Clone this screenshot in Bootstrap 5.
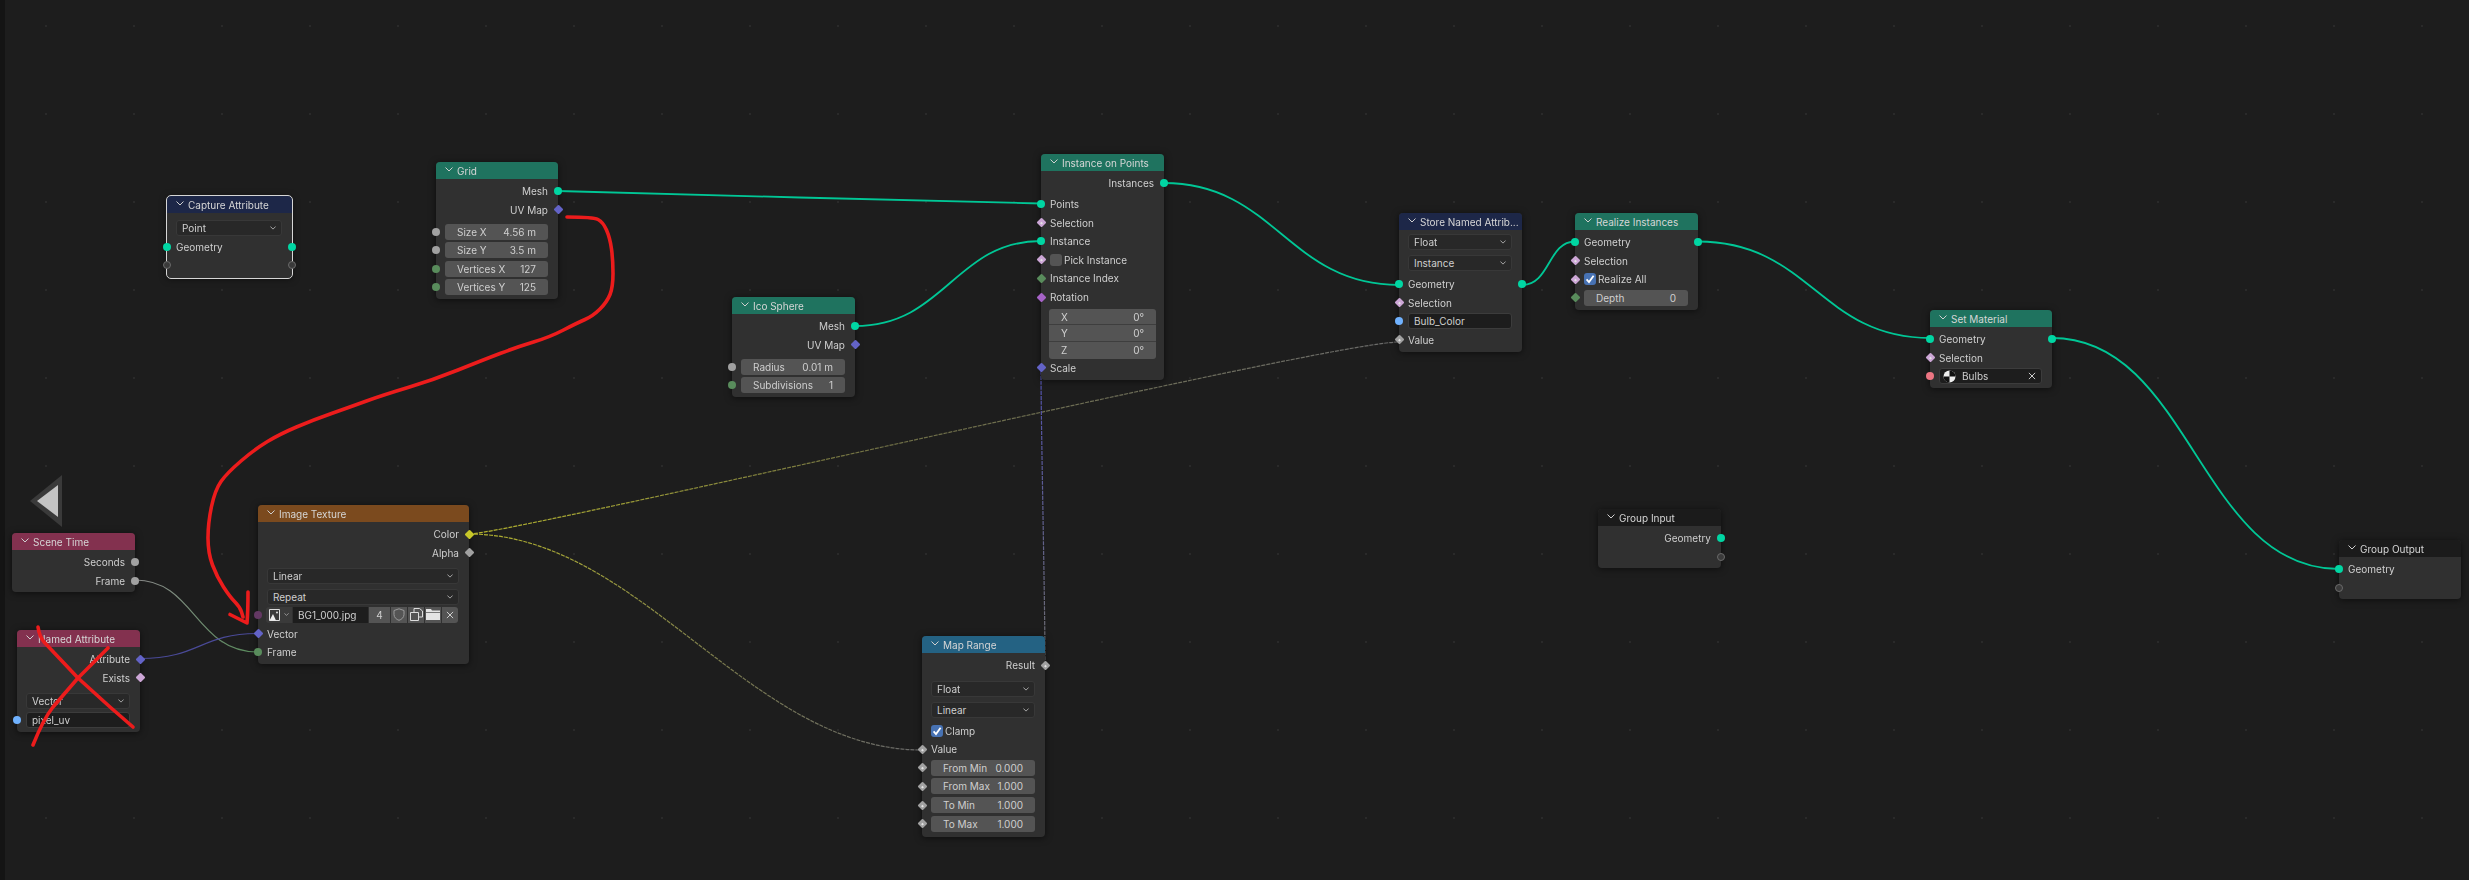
<!DOCTYPE html>
<html lang="en">
<head>
  <meta charset="UTF-8" />
  <title>Geometry Nodes</title>
  <link href="https://cdn.jsdelivr.net/npm/bootstrap@5.3.0/dist/css/bootstrap.min.css" rel="stylesheet" />
  <style>
    body { background: #1d1d1d; margin: 0; }
    .gcanvas {
      width: 2469px; height: 880px;
      font-family: "Inter", "Liberation Sans", sans-serif; font-size: 10px; color: #cfcfcf; line-height: 1;
      background-color: #1d1d1d;
      background-image: linear-gradient(#141414, #141414), radial-gradient(circle, #2a2a2a 1px, transparent 1.5px);
      background-size: 5px 100%, 88px 88px;
      background-position: 0 0, 2px -18px;
      background-repeat: no-repeat, repeat;
    }
    .glayer { left: 0; top: 0; width: 2469px; height: 880px; pointer-events: none; filter: blur(.3px); }

    .bnode { width: 123px; background: #303030; border-radius: 4px; box-shadow: 0 1px 7px rgba(0,0,0,.55); z-index: 1; filter: blur(.3px); }
    .bhead { height: 17px; padding-left: 9px; gap: 4px; border-radius: 4px 4px 0 0; color: #d6d6d6; white-space: nowrap; }
    .bhead svg { flex-shrink: 0; margin-top: -3px; }
    .bbody { padding: 2.8px 0 2.4px; }
    .brow { height: 18.6px; padding: 0 10px 0 9px; }
    .bgap { margin-top: 3.4px; }
    .bsep { margin-top: 5px; }
    .bmin { margin-top: 2.4px; }
    .bpadend { padding-bottom: 3.6px; }
    .cap-top { margin-top: 3px; }
    .cap-end { padding-bottom: 3.5px; }

    .h-geo { background: #1f735f; }
    .h-inp { background: #83314f; }
    .h-tex { background: #7b4a1e; }
    .h-con { background: #246283; }
    .h-att { background: #1d2748; }
    .h-grp { background: #1b1b1b; }

    .bsel, .bstr, .bnum { height: 16px; border-radius: 3px; }
    .bsel { background: #282828; border: 1px solid #383838; padding: 0 5px; }
    .bstr { background: #1d1d1d; border: 1px solid #3c3c3c; padding: 0 5px; }
    .bnum { background: #545454; padding: 0 12px; }
    .bvec { background: #545454; border-radius: 3px; }
    .bvec > div { height: 16.6px; padding: 0 12px; border-bottom: 1px solid #3e3e3e; }
    .bvec > div:last-child { border-bottom: 0; }
    .bcheck { width: 12px; height: 12px; border-radius: 3px; background: #545454; margin-right: 2px; }
    .bcheck.on { background: #4772b3; }

    .bsock { position: absolute; top: 50%; width: 8px; height: 8px; margin-top: -4px; border-radius: 50%; z-index: 2; }
    .bsock.dia { width: 7px; height: 7px; margin-top: -3.5px; border-radius: 1px; transform: rotate(45deg); }
    .bsock.dia.fld::after { content: ""; position: absolute; left: 2.5px; top: 2.5px; width: 2px; height: 2px; background: #e4e4e4; }
    .sl { left: -4px; }
    .sr { right: -4px; }
    .bsock.dia.sl { left: -3.5px; }
    .bsock.dia.sr { right: -3.5px; }
    .s-geo { background: #00d6a3; }
    .s-flt { background: #a1a1a1; }
    .s-int { background: #598c5c; }
    .s-vec { background: #6363c7; }
    .s-boo { background: #cca6d6; }
    .s-rot { background: #a663c7; }
    .s-col { background: #c7c729; }
    .s-str { background: #70b2ff; }
    .s-mat { background: #eb7582; }
    .s-img { background: #633863; }
    .s-nil { background: #3a3a3a; border: 1px solid #6a6a6a; }

    .imgbox { height: 16px; margin: 0 9px 2px 8px; gap: 1px; }
    .imgbox > div { height: 100%; background: #545454; }
    .imgbox .ipick { width: 26px; background: #3a3a3a; border-radius: 3px 0 0 3px; }
    .imgbox .iname { width: 75px; background: #1d1d1d; padding-left: 5px; }
    .imgbox .icnt { width: 21px; }
    .imgbox .ibtn { width: 16px; }
    .imgbox .ibtn:last-child { border-radius: 0 3px 3px 0; }
    .matbox { gap: 6px; padding-left: 3px; }

    /* node places on the canvas */
    #n-capture { left: 167px; top: 196px; width: 125px; outline: 1.5px solid #d6d6d6; }
    #n-grid { left: 436px; top: 162px; width: 122px; }
    #n-ico { left: 732px; top: 297px; }
    #n-inst { left: 1041px; top: 154px; }
    #n-store { left: 1399px; top: 213px; }
    #n-realize { left: 1575px; top: 213px; }
    #n-setmat { left: 1930px; top: 310px; width: 122px; }
    #n-ginput { left: 1598px; top: 509px; }
    #n-goutput { left: 2339px; top: 540px; width: 122px; }
    #n-scene { left: 12px; top: 533px; }
    #n-named { left: 17px; top: 630px; }
    #n-image { left: 258px; top: 505px; width: 211px; }
    #n-map { left: 922px; top: 636px; }
    .w-main { fill: none; stroke: #00c796; stroke-width: 1.8; }
    .w-thin { fill: none; stroke-width: 1.2; }
    .w-red { fill: none; stroke: #ec1c1c; stroke-width: 3.6; stroke-linecap: round; stroke-linejoin: round; }
  </style>
</head>
<body>
  <svg width="0" height="0" class="position-absolute">
    <defs>
      <symbol id="chev" viewBox="0 0 8 5"><path d="M.5.5 4 4 7.5.5" fill="none" stroke="#cfcfcf" stroke-width="1"/></symbol>
      <symbol id="tick" viewBox="0 0 12 12"><path d="M2.6 6.4 5 9 9.6 2.8" fill="none" stroke="#fff" stroke-width="1.8"/></symbol>
      <symbol id="cross" viewBox="0 0 9 9"><path d="M1 1 8 8M8 1 1 8" fill="none" stroke="#d0d0d0" stroke-width="1.1"/></symbol>
    </defs>
  </svg>

  <div class="gcanvas position-relative overflow-hidden">
    <!-- links go under the nodes -->
    <svg class="glayer position-absolute">
      <defs>
        <linearGradient id="g-frame" gradientUnits="userSpaceOnUse" x1="135" y1="580" x2="258" y2="652"><stop offset="0" stop-color="#8a8a8a"/><stop offset="1" stop-color="#598c5c"/></linearGradient>
        <linearGradient id="g-c1" gradientUnits="userSpaceOnUse" x1="469" y1="534" x2="1399" y2="342"><stop offset="0" stop-color="#b4b42e"/><stop offset=".45" stop-color="#6e6e45"/><stop offset="1" stop-color="#6a6a6a"/></linearGradient>
        <linearGradient id="g-c2" gradientUnits="userSpaceOnUse" x1="469" y1="534" x2="922" y2="750"><stop offset="0" stop-color="#b4b42e"/><stop offset=".6" stop-color="#777750"/><stop offset="1" stop-color="#6a6a6a"/></linearGradient>
        <linearGradient id="g-sc" gradientUnits="userSpaceOnUse" x1="1045" y1="665" x2="1041" y2="369"><stop offset="0" stop-color="#6e6e6e"/><stop offset="1" stop-color="#5050b0"/></linearGradient>
      </defs>
      <path class="w-main" d="M558 191C580 191.6 1018 203.5 1041 203.5"/>
      <path class="w-main" d="M855 326C945 326 955 241 1041 241"/>
      <path class="w-main" d="M1164 183C1275 183 1288 285 1399 285"/>
      <path class="w-main" d="M1522 285C1550 285 1548 241.5 1575 241.5"/>
      <path class="w-main" d="M1698 241.5C1810 241.5 1820 338 1930 338"/>
      <path class="w-main" d="M2052 338C2190 338 2200 569 2339 569"/>
      <path class="w-thin" stroke="url(#g-frame)" d="M135 580C195 580 195 652 258 652"/>
      <path class="w-thin" stroke="#4a4a98" d="M140 658.5C200 658.5 200 633.5 258 633.5"/>
      <path class="w-thin" stroke="url(#g-c1)" stroke-dasharray="4 1" d="M469 534C510 534 1330 342 1399 342"/>
      <path class="w-thin" stroke="url(#g-c2)" stroke-dasharray="4 1" d="M469 534C640 534 750 750 922 750"/>
      <path class="w-thin" stroke="url(#g-sc)" stroke-dasharray="4 1" d="M1045 665C1045 600 1041 430 1041 369"/>
    </svg>

    <div class="bnode position-absolute" id="n-capture">
      <div class="bhead h-att d-flex align-items-center"><svg width="8" height="5"><use href="#chev"/></svg>Capture Attribute</div>
      <div class="bbody cap-end">
        <div class="brow d-flex align-items-center cap-top"><div class="bsel flex-fill d-flex justify-content-between align-items-center">Point<svg width="6" height="4"><use href="#chev"/></svg></div></div>
        <div class="brow d-flex align-items-center position-relative">Geometry<i class="bsock s-geo sl"></i><i class="bsock s-geo sr"></i></div>
        <div class="brow position-relative"><i class="bsock s-nil sl"></i><i class="bsock s-nil sr"></i></div>
      </div>
    </div>

    <div class="bnode position-absolute" id="n-grid">
      <div class="bhead h-geo d-flex align-items-center"><svg width="8" height="5"><use href="#chev"/></svg>Grid</div>
      <div class="bbody">
        <div class="brow d-flex align-items-center justify-content-end position-relative">Mesh<i class="bsock s-geo sr"></i></div>
        <div class="brow d-flex align-items-center justify-content-end position-relative">UV Map<i class="bsock dia s-vec sr"></i></div>
        <div class="brow bgap d-flex align-items-center position-relative"><div class="bnum flex-fill d-flex justify-content-between align-items-center"><span>Size X</span><span>4.56 m</span></div><i class="bsock s-flt sl"></i></div>
        <div class="brow d-flex align-items-center position-relative"><div class="bnum flex-fill d-flex justify-content-between align-items-center"><span>Size Y</span><span>3.5 m</span></div><i class="bsock s-flt sl"></i></div>
        <div class="brow d-flex align-items-center position-relative"><div class="bnum flex-fill d-flex justify-content-between align-items-center"><span>Vertices X</span><span>127</span></div><i class="bsock s-int sl"></i></div>
        <div class="brow d-flex align-items-center position-relative"><div class="bnum flex-fill d-flex justify-content-between align-items-center"><span>Vertices Y</span><span>125</span></div><i class="bsock s-int sl"></i></div>
      </div>
    </div>

    <div class="bnode position-absolute" id="n-ico">
      <div class="bhead h-geo d-flex align-items-center"><svg width="8" height="5"><use href="#chev"/></svg>Ico Sphere</div>
      <div class="bbody">
        <div class="brow d-flex align-items-center justify-content-end position-relative">Mesh<i class="bsock s-geo sr"></i></div>
        <div class="brow d-flex align-items-center justify-content-end position-relative">UV Map<i class="bsock dia s-vec sr"></i></div>
        <div class="brow bgap d-flex align-items-center position-relative"><div class="bnum flex-fill d-flex justify-content-between align-items-center"><span>Radius</span><span>0.01 m</span></div><i class="bsock s-flt sl"></i></div>
        <div class="brow d-flex align-items-center position-relative"><div class="bnum flex-fill d-flex justify-content-between align-items-center"><span>Subdivisions</span><span>1</span></div><i class="bsock s-int sl"></i></div>
      </div>
    </div>

    <div class="bnode position-absolute" id="n-inst">
      <div class="bhead h-geo d-flex align-items-center"><svg width="8" height="5"><use href="#chev"/></svg>Instance on Points</div>
      <div class="bbody">
        <div class="brow d-flex align-items-center justify-content-end position-relative">Instances<i class="bsock s-geo sr"></i></div>
        <div class="brow d-flex align-items-center position-relative bmin">Points<i class="bsock s-geo sl"></i></div>
        <div class="brow d-flex align-items-center position-relative">Selection<i class="bsock dia fld s-boo sl"></i></div>
        <div class="brow d-flex align-items-center position-relative">Instance<i class="bsock s-geo sl"></i></div>
        <div class="brow d-flex align-items-center position-relative"><span class="bcheck"></span>Pick Instance<i class="bsock dia fld s-boo sl"></i></div>
        <div class="brow d-flex align-items-center position-relative">Instance Index<i class="bsock dia s-int sl"></i></div>
        <div class="brow d-flex align-items-center position-relative">Rotation<i class="bsock dia s-rot sl"></i></div>
        <div class="bvec mx-2 bmin">
          <div class="d-flex justify-content-between align-items-center"><span>X</span><span>0°</span></div>
          <div class="d-flex justify-content-between align-items-center"><span>Y</span><span>0°</span></div>
          <div class="d-flex justify-content-between align-items-center"><span>Z</span><span>0°</span></div>
        </div>
        <div class="brow d-flex align-items-center position-relative">Scale<i class="bsock dia s-vec sl"></i></div>
      </div>
    </div>

    <div class="bnode position-absolute" id="n-store">
      <div class="bhead h-att d-flex align-items-center"><svg width="8" height="5"><use href="#chev"/></svg><span>Store Named Attrib...</span></div>
      <div class="bbody">
        <div class="brow d-flex align-items-center"><div class="bsel flex-fill d-flex justify-content-between align-items-center">Float<svg width="6" height="4"><use href="#chev"/></svg></div></div>
        <div class="brow bmin d-flex align-items-center"><div class="bsel flex-fill d-flex justify-content-between align-items-center">Instance<svg width="6" height="4"><use href="#chev"/></svg></div></div>
        <div class="brow bmin d-flex align-items-center position-relative">Geometry<i class="bsock s-geo sl"></i><i class="bsock s-geo sr"></i></div>
        <div class="brow d-flex align-items-center position-relative">Selection<i class="bsock dia fld s-boo sl"></i></div>
        <div class="brow d-flex align-items-center position-relative"><div class="bstr flex-fill d-flex align-items-center">Bulb_Color</div><i class="bsock s-str sl"></i></div>
        <div class="brow d-flex align-items-center position-relative">Value<i class="bsock dia fld s-flt sl"></i></div>
      </div>
    </div>

    <div class="bnode position-absolute" id="n-realize">
      <div class="bhead h-geo d-flex align-items-center"><svg width="8" height="5"><use href="#chev"/></svg>Realize Instances</div>
      <div class="bbody">
        <div class="brow d-flex align-items-center position-relative">Geometry<i class="bsock s-geo sl"></i><i class="bsock s-geo sr"></i></div>
        <div class="brow d-flex align-items-center position-relative">Selection<i class="bsock dia fld s-boo sl"></i></div>
        <div class="brow d-flex align-items-center position-relative"><span class="bcheck on d-flex"><svg width="12" height="12"><use href="#tick"/></svg></span>Realize All<i class="bsock dia fld s-boo sl"></i></div>
        <div class="brow d-flex align-items-center position-relative"><div class="bnum flex-fill d-flex justify-content-between align-items-center"><span>Depth</span><span>0</span></div><i class="bsock dia s-int sl"></i></div>
      </div>
    </div>

    <div class="bnode position-absolute" id="n-setmat">
      <div class="bhead h-geo d-flex align-items-center"><svg width="8" height="5"><use href="#chev"/></svg>Set Material</div>
      <div class="bbody">
        <div class="brow d-flex align-items-center position-relative">Geometry<i class="bsock s-geo sl"></i><i class="bsock s-geo sr"></i></div>
        <div class="brow d-flex align-items-center position-relative">Selection<i class="bsock dia fld s-boo sl"></i></div>
        <div class="brow d-flex align-items-center position-relative">
          <div class="bstr matbox flex-fill d-flex align-items-center">
            <svg width="13" height="13" viewBox="0 0 13 13"><circle cx="6.5" cy="6.5" r="6" fill="#eee"/><path d="M6.5.5A6 6 0 0 1 12.5 6.5H6.5ZM6.5 6.5V12.5A6 6 0 0 1 .5 6.5H6.5Z" fill="#111"/></svg>
            <span class="flex-fill">Bulbs</span>
            <svg width="8" height="8"><use href="#cross"/></svg>
          </div>
          <i class="bsock s-mat sl"></i>
        </div>
      </div>
    </div>

    <div class="bnode position-absolute" id="n-ginput">
      <div class="bhead h-grp d-flex align-items-center"><svg width="8" height="5"><use href="#chev"/></svg>Group Input</div>
      <div class="bbody">
        <div class="brow d-flex align-items-center justify-content-end position-relative">Geometry<i class="bsock s-geo sr"></i></div>
        <div class="brow position-relative"><i class="bsock s-nil sr"></i></div>
      </div>
    </div>

    <div class="bnode position-absolute" id="n-goutput">
      <div class="bhead h-grp d-flex align-items-center"><svg width="8" height="5"><use href="#chev"/></svg>Group Output</div>
      <div class="bbody">
        <div class="brow d-flex align-items-center position-relative">Geometry<i class="bsock s-geo sl"></i></div>
        <div class="brow position-relative"><i class="bsock s-nil sl"></i></div>
      </div>
    </div>

    <div class="bnode position-absolute" id="n-scene">
      <div class="bhead h-inp d-flex align-items-center"><svg width="8" height="5"><use href="#chev"/></svg>Scene Time</div>
      <div class="bbody">
        <div class="brow d-flex align-items-center justify-content-end position-relative">Seconds<i class="bsock s-flt sr"></i></div>
        <div class="brow d-flex align-items-center justify-content-end position-relative">Frame<i class="bsock s-flt sr"></i></div>
      </div>
    </div>

    <div class="bnode position-absolute" id="n-named">
      <div class="bhead h-inp d-flex align-items-center"><svg width="8" height="5"><use href="#chev"/></svg>Named Attribute</div>
      <div class="bbody">
        <div class="brow d-flex align-items-center justify-content-end position-relative">Attribute<i class="bsock dia s-vec sr"></i></div>
        <div class="brow d-flex align-items-center justify-content-end position-relative">Exists<i class="bsock dia s-boo sr"></i></div>
        <div class="brow bsep d-flex align-items-center"><div class="bsel flex-fill d-flex justify-content-between align-items-center">Vector<svg width="6" height="4"><use href="#chev"/></svg></div></div>
        <div class="brow d-flex align-items-center position-relative"><div class="bstr flex-fill d-flex align-items-center">pixel_uv</div><i class="bsock s-str sl"></i></div>
      </div>
    </div>

    <div class="bnode position-absolute" id="n-image">
      <div class="bhead h-tex d-flex align-items-center"><svg width="8" height="5"><use href="#chev"/></svg>Image Texture</div>
      <div class="bbody">
        <div class="brow d-flex align-items-center justify-content-end position-relative">Color<i class="bsock dia s-col sr"></i></div>
        <div class="brow d-flex align-items-center justify-content-end position-relative">Alpha<i class="bsock dia s-flt sr"></i></div>
        <div class="brow bsep d-flex align-items-center"><div class="bsel flex-fill d-flex justify-content-between align-items-center">Linear<svg width="6" height="4"><use href="#chev"/></svg></div></div>
        <div class="brow bmin d-flex align-items-center"><div class="bsel flex-fill d-flex justify-content-between align-items-center">Repeat<svg width="6" height="4"><use href="#chev"/></svg></div></div>
        <div class="position-relative">
          <div class="imgbox d-flex align-items-center">
            <div class="ipick d-flex align-items-center justify-content-center gap-1">
              <svg width="11" height="12" viewBox="0 0 11 12"><path d="M.5.5h10v11H.5Z" fill="none" stroke="#ddd"/><path d="M.5 11.500 4 5l3 6.500Z" fill="#eee"/><circle cx="8" cy="3.500" r="1" fill="#ddd"/></svg>
              <svg width="5" height="3"><use href="#chev"/></svg>
            </div>
            <div class="iname d-flex align-items-center">BG1_000.jpg</div>
            <div class="icnt d-flex align-items-center justify-content-center">4</div>
            <div class="ibtn d-flex align-items-center justify-content-center"><svg width="12" height="13" viewBox="0 0 12 13"><path d="M6 .8 11 2.500V6.500C11 9.500 8.500 11.500 6 12.300 3.500 11.500 1 9.500 1 6.500V2.500Z" fill="none" stroke="#9a9a9a"/></svg></div>
            <div class="ibtn d-flex align-items-center justify-content-center"><svg width="13" height="13" viewBox="0 0 13 13"><path d="M.5 4.500H4V.5H9.500L12.500 3V9H8.500V12.500H.5Z M4 4.500H8.500V9" fill="none" stroke="#ddd"/></svg></div>
            <div class="ibtn d-flex align-items-center justify-content-center"><svg width="14" height="11" viewBox="0 0 14 11"><path d="M0 0H5L6 1.500H14V3H0ZM0 3.800H14V11H0Z" fill="#e4e4e4"/></svg></div>
            <div class="ibtn d-flex align-items-center justify-content-center"><svg width="8" height="8"><use href="#cross"/></svg></div>
          </div>
          <i class="bsock s-img sl"></i>
        </div>
        <div class="brow d-flex align-items-center position-relative">Vector<i class="bsock dia s-vec sl"></i></div>
        <div class="brow d-flex align-items-center position-relative">Frame<i class="bsock s-int sl"></i></div>
      </div>
    </div>

    <div class="bnode position-absolute" id="n-map">
      <div class="bhead h-con d-flex align-items-center"><svg width="8" height="5"><use href="#chev"/></svg>Map Range</div>
      <div class="bbody bpadend">
        <div class="brow d-flex align-items-center justify-content-end position-relative">Result<i class="bsock dia fld s-flt sr"></i></div>
        <div class="brow bsep d-flex align-items-center"><div class="bsel flex-fill d-flex justify-content-between align-items-center">Float<svg width="6" height="4"><use href="#chev"/></svg></div></div>
        <div class="brow bmin d-flex align-items-center"><div class="bsel flex-fill d-flex justify-content-between align-items-center">Linear<svg width="6" height="4"><use href="#chev"/></svg></div></div>
        <div class="brow bmin d-flex align-items-center"><span class="bcheck on d-flex"><svg width="12" height="12"><use href="#tick"/></svg></span>Clamp</div>
        <div class="brow d-flex align-items-center position-relative">Value<i class="bsock dia fld s-flt sl"></i></div>
        <div class="brow d-flex align-items-center position-relative"><div class="bnum flex-fill d-flex justify-content-between align-items-center"><span>From Min</span><span>0.000</span></div><i class="bsock dia fld s-flt sl"></i></div>
        <div class="brow d-flex align-items-center position-relative"><div class="bnum flex-fill d-flex justify-content-between align-items-center"><span>From Max</span><span>1.000</span></div><i class="bsock dia fld s-flt sl"></i></div>
        <div class="brow d-flex align-items-center position-relative"><div class="bnum flex-fill d-flex justify-content-between align-items-center"><span>To Min</span><span>1.000</span></div><i class="bsock dia fld s-flt sl"></i></div>
        <div class="brow d-flex align-items-center position-relative"><div class="bnum flex-fill d-flex justify-content-between align-items-center"><span>To Max</span><span>1.000</span></div><i class="bsock dia fld s-flt sl"></i></div>
      </div>
    </div>

    <!-- hand drawn marks on top of the screenshot -->
    <svg class="glayer position-absolute" style="z-index: 3">
      <polygon points="62,475 30,501 62,527" fill="#3a3a3a"/>
      <polygon points="58,485 37,501 58,517" fill="#c4c4c4"/>
      <path class="w-red" id="red-curve"/>
      <path class="w-red" d="M248 592C248 603 248 612 247 623L230 614.500"/>
      <path class="w-red" d="M38 627C39 634 40 637 44 642L78 678 110 707 133 727"/>
      <path class="w-red" d="M108 648 78 678 53 707C45 717 39 730 33 745"/>
    </svg>
  </div>

  <script src="https://cdn.jsdelivr.net/npm/bootstrap@5.3.0/dist/js/bootstrap.bundle.min.js"></script>
  <script>
    // the red arrow from UV Map down to the image node, smoothed through its points
    const pts = [[567,217],[593,217],[603,222],[610,238],[613,260],[613,287],[607,302],[593,316],[577,323],[550,337],[517,347],[483,360],[433,380],[383,395],[350,407],[313,420],[280,434],[255,449],[227,473],[215,490],[208,523],[208,553],[217,577],[230,597],[240,607],[243,617]];
    let d = `M${pts[0][0]} ${pts[0][1]}`;
    for (let i = 1; i < pts.length - 1; i++) {
      const mx = (pts[i][0] + pts[i + 1][0]) / 2;
      const my = (pts[i][1] + pts[i + 1][1]) / 2;
      d += `Q${pts[i][0]} ${pts[i][1]} ${mx} ${my}`;
    }
    const last = pts[pts.length - 1];
    d += `L${last[0]} ${last[1]}`;
    document.getElementById('red-curve').setAttribute('d', d);
  </script>
</body>
</html>
